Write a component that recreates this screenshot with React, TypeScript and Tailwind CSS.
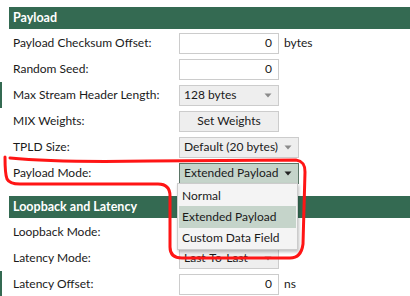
import React from "react";

const Arrow = ({ dark = false }: { dark?: boolean }) => (
  <svg width="8" height="5" viewBox="0 0 8 5" className="shrink-0">
    <path d="M0.5 0.5 L7.5 0.5 L4 4.5 Z" fill={dark ? "#222222" : "#8a8a8a"} />
  </svg>
);

const Header = ({ children }: { children: React.ReactNode }) => (
  <div className="ml-[9px] h-[22px] bg-[#346a52] pl-[4px] flex items-center text-white font-bold text-[12.5px] whitespace-nowrap">
    {children}
  </div>
);

const Row = ({
  label,
  children,
  marker = false,
}: {
  label: string;
  children: React.ReactNode;
  marker?: boolean;
}) => (
  <div
    className={
      marker
        ? "h-[26px] flex items-center border-l-2 border-[#346a52] pl-[11px] whitespace-nowrap"
        : "h-[26px] flex items-center pl-[13px] whitespace-nowrap"
    }
  >
    <div className="w-[166px] shrink-0">{label}</div>
    {children}
  </div>
);

const Input = ({ value }: { value: string }) => (
  <div className="w-[100px] h-[21px] bg-white border border-[#cccccc] flex items-center justify-end pr-[6px]">
    {value}
  </div>
);

const Select = ({ value, w = "w-[100px]" }: { value: string; w?: string }) => (
  <div
    className={`${w} h-[21px] bg-[#eeeeee] border border-[#cccccc] flex items-center justify-between pl-[4px] pr-[6px]`}
  >
    <span>{value}</span>
    <Arrow />
  </div>
);

export default function App() {
  return (
    <div
      className="relative w-[410px] h-[296px] bg-white overflow-hidden text-[12px] text-[#1a1a1a]"
      style={{ fontFamily: 'Lato, "Noto Sans", sans-serif' }}
    >
      <div className="pt-[7px]">
        <Header>Payload</Header>
        <div className="pt-[1px]">
          <Row label="Payload Checksum Offset:">
            <Input value="0" />
            <span className="ml-[5px]">bytes</span>
          </Row>
          <Row label="Random Seed:">
            <Input value="0" />
          </Row>
          <Row label="Max Stream Header Length:" marker>
            <Select value="128 bytes" />
          </Row>
          <Row label="MIX Weights:">
            <div className="w-[100px] h-[21px] bg-[#eeeeee] border border-[#cccccc] flex items-center justify-center">
              Set Weights
            </div>
          </Row>
          <Row label="TPLD Size:">
            <Select value="Default (20 bytes)" w="w-[120px]" />
          </Row>
          <Row label="Payload Mode:">
            <div className="w-[120px] h-[21px] bg-[#c5d4ca] border border-[#5b7566] flex items-center justify-between pl-[4px] pr-[6px]">
              <span>Extended Payload</span>
              <Arrow dark />
            </div>
          </Row>
        </div>
        <div className="pt-[10px]">
          <Header>Loopback and Latency</Header>
          <div className="pt-[1px]">
            <Row label="Loopback Mode:">
              <Select value="" />
            </Row>
            <Row label="Latency Mode:">
              <Select value="Last-To-Last" />
            </Row>
            <Row label="Latency Offset:" marker>
              <Input value="0" />
              <span className="ml-[5px]">ns</span>
            </Row>
          </div>
        </div>
      </div>

      {/* dropdown popup */}
      <div className="absolute left-[177px] top-[183px] w-[121px] h-[67px] bg-[#f4f4f4] border border-[#cccccc] shadow-[1px_2px_3px_rgba(0,0,0,0.25)] flex flex-col py-[1px] px-[1px] whitespace-nowrap">
        <div className="h-[22px] flex items-center pl-[3px]">Normal</div>
        <div className="h-[22px] flex items-center pl-[3px] bg-[#c5d4ca]">Extended Payload</div>
        <div className="h-[21px] flex items-center pl-[3px]">Custom Data Field</div>
      </div>

      {/* red annotation */}
      <svg
        className="absolute left-0 top-0 pointer-events-none"
        width="410"
        height="296"
        viewBox="0 0 410 296"
      >
        <path
          d="M5 157 C5 166 5 174 7 179 C9 183 13 184 20 184 L158 184 C166 184 170 188 170 196 L170 247 C170 254 174 258 182 258 L290 258 C298 258 302 252 303 244 L305 172 C305 164 302 161 296 160 L150 161 C90 162 40 161 10 158"
          fill="none"
          stroke="#ff1515"
          strokeWidth="3"
          strokeLinecap="round"
          strokeLinejoin="round"
        />
      </svg>
    </div>
  );
}
